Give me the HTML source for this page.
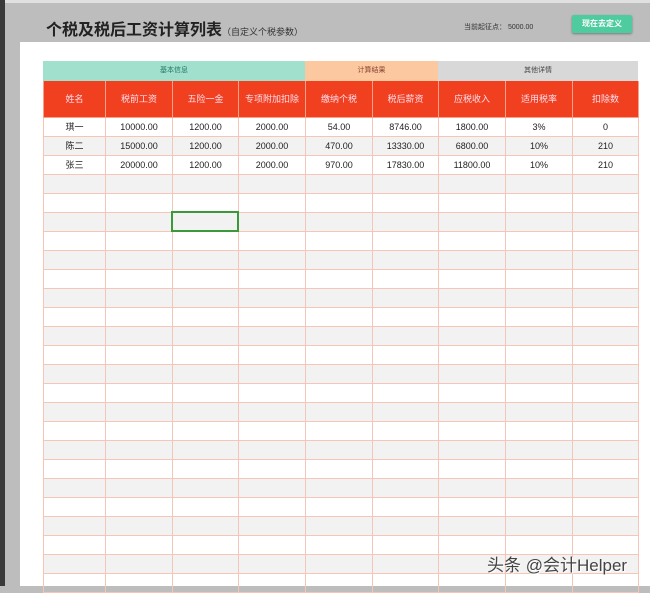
<!DOCTYPE html>
<html><head><meta charset="utf-8"><style>
*{margin:0;padding:0;box-sizing:border-box}
body{width:650px;height:586px;overflow:hidden;background:#bdbdbd;font-family:"Liberation Sans","Noto Sans CJK SC",sans-serif;position:relative}
.dark{position:absolute;left:0;top:0;width:5px;height:586px;background:#3a3a3a}
.topline{position:absolute;left:0;top:0;width:650px;height:3px;background:#e0e0e0}
.white{position:absolute;left:20px;top:42px;width:630px;height:544px;background:#fff}
.title{position:absolute;left:46px;top:16px;font-size:16px;font-weight:bold;color:#222}
.title small{font-size:9px;font-weight:normal;color:#333}
.th{position:absolute;left:464px;top:22px;font-size:7px;color:#333}
.btn{position:absolute;left:572px;top:15px;width:60px;height:18px;background:#4fcba0;color:#fff;font-size:8px;font-weight:bold;text-align:center;line-height:18px;border-radius:2px;box-shadow:0 1px 2px #777}
.g{position:absolute;top:61px;height:20px;font-size:7px;text-align:center;line-height:20px}
table{position:absolute;left:43px;top:81px;border-collapse:collapse;table-layout:fixed;width:595px}
td{border:1px solid #f5c5b5;height:19px;font-size:9px;text-align:center;color:#222;padding:0}
tr.h td{height:36px;background:#f0401f;color:#fde;border-color:#f7a08a;border-top:none}
tr:nth-child(odd):not(.h) td{background:#f2f2f2}
.sel{position:absolute;left:171px;top:211px;width:68px;height:21px;border:2px solid #3a9a3a}
.wm{position:absolute;left:487px;top:551px;font-size:17px;color:#444;text-shadow:1px 1px 0 #fff}
</style></head><body>
<div class="topline"></div><div class="dark"></div>
<div class="white"></div>
<div class="title">个税及税后工资计算列表<small>（自定义个税参数）</small></div>
<div class="th">当前起征点： 5000.00</div>
<div class="btn">现在去定义</div>
<div class="g" style="left:43px;width:262px;background:#a0e0cc;color:#276">基本信息</div>
<div class="g" style="left:305px;width:133px;background:#fcc8a0;color:#843">计算结果</div>
<div class="g" style="left:438px;width:200px;background:#d8d8d8;color:#444">其他详情</div>
<table>
<colgroup><col style="width:62px"><col style="width:67px"><col style="width:66px"><col style="width:67px"><col style="width:67px"><col style="width:66px"><col style="width:67px"><col style="width:67px"><col style="width:66px"></colgroup>
<tr class="h"><td>姓名</td><td>税前工资</td><td>五险一金</td><td>专项附加扣除</td><td>缴纳个税</td><td>税后薪资</td><td>应税收入</td><td>适用税率</td><td>扣除数</td></tr>
<tr><td>琪一</td><td>10000.00</td><td>1200.00</td><td>2000.00</td><td>54.00</td><td>8746.00</td><td>1800.00</td><td>3%</td><td>0</td></tr>
<tr><td>陈二</td><td>15000.00</td><td>1200.00</td><td>2000.00</td><td>470.00</td><td>13330.00</td><td>6800.00</td><td>10%</td><td>210</td></tr>
<tr><td>张三</td><td>20000.00</td><td>1200.00</td><td>2000.00</td><td>970.00</td><td>17830.00</td><td>11800.00</td><td>10%</td><td>210</td></tr>
<tr><td></td><td></td><td></td><td></td><td></td><td></td><td></td><td></td><td></td></tr>
<tr><td></td><td></td><td></td><td></td><td></td><td></td><td></td><td></td><td></td></tr>
<tr><td></td><td></td><td></td><td></td><td></td><td></td><td></td><td></td><td></td></tr>
<tr><td></td><td></td><td></td><td></td><td></td><td></td><td></td><td></td><td></td></tr>
<tr><td></td><td></td><td></td><td></td><td></td><td></td><td></td><td></td><td></td></tr>
<tr><td></td><td></td><td></td><td></td><td></td><td></td><td></td><td></td><td></td></tr>
<tr><td></td><td></td><td></td><td></td><td></td><td></td><td></td><td></td><td></td></tr>
<tr><td></td><td></td><td></td><td></td><td></td><td></td><td></td><td></td><td></td></tr>
<tr><td></td><td></td><td></td><td></td><td></td><td></td><td></td><td></td><td></td></tr>
<tr><td></td><td></td><td></td><td></td><td></td><td></td><td></td><td></td><td></td></tr>
<tr><td></td><td></td><td></td><td></td><td></td><td></td><td></td><td></td><td></td></tr>
<tr><td></td><td></td><td></td><td></td><td></td><td></td><td></td><td></td><td></td></tr>
<tr><td></td><td></td><td></td><td></td><td></td><td></td><td></td><td></td><td></td></tr>
<tr><td></td><td></td><td></td><td></td><td></td><td></td><td></td><td></td><td></td></tr>
<tr><td></td><td></td><td></td><td></td><td></td><td></td><td></td><td></td><td></td></tr>
<tr><td></td><td></td><td></td><td></td><td></td><td></td><td></td><td></td><td></td></tr>
<tr><td></td><td></td><td></td><td></td><td></td><td></td><td></td><td></td><td></td></tr>
<tr><td></td><td></td><td></td><td></td><td></td><td></td><td></td><td></td><td></td></tr>
<tr><td></td><td></td><td></td><td></td><td></td><td></td><td></td><td></td><td></td></tr>
<tr><td></td><td></td><td></td><td></td><td></td><td></td><td></td><td></td><td></td></tr>
<tr><td></td><td></td><td></td><td></td><td></td><td></td><td></td><td></td><td></td></tr>
<tr><td></td><td></td><td></td><td></td><td></td><td></td><td></td><td></td><td></td></tr>
</table>
<div class="sel"></div>
<div class="wm">头条 @会计Helper</div>
</body></html>
